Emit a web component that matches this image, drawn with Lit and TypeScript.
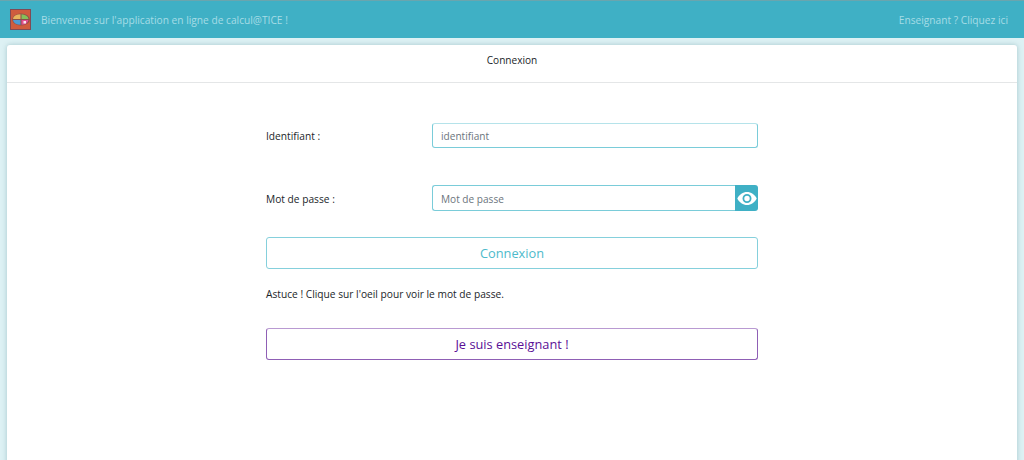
import { LitElement, html, css } from "lit";
import { customElement } from "lit/decorators.js";

@customElement("app-root")
export class AppRoot extends LitElement {
  static styles = css`
    :host { display: block; height: 460px; overflow: hidden; background: #ddf1f4; font-family: "Open Sans", "Noto Sans", sans-serif; color: #212529; }
    .nav { height: 38px; box-sizing: border-box; border-top: 1px solid #6aa5ae; background: #3fb0c5; display: flex; align-items: center; padding: 0 16px 0 10px; font-size: 10.2px; color: #a6dce6; }
    .logo { width: 21px; height: 21px; margin-right: 10px; display: block; }
    .spacer { flex: 1; }
    .card { margin: 7px 7px 0; height: 440px; background: #fff; border-radius: 3px; box-shadow: 0 0 5px rgba(60,120,130,.35); }
    .head { height: 38px; box-sizing: border-box; padding-bottom: 7px; border-bottom: 1px solid #e4e6e7; display: flex; align-items: center; justify-content: center; font-size: 10.1px; }
    .form { width: 492px; margin: 40px auto 0 259px; display: flex; flex-direction: column; }
    .row { display: grid; grid-template-columns: 166px 326px; align-items: center; font-size: 10.2px; }
    .row + .row { margin-top: 37px; }
    .label { padding-top: 1px; }
    .field { height: 26px; box-sizing: border-box; border: 1px solid #7accd9; border-radius: 3px; display: flex; align-items: center; padding: 1px 8px 0; color: #6c757d; font-size: 10.1px; }
    .first { height: 25px; border-top-color: #b5e3ea; }
    .group { display: flex; height: 26px; }
    .group .field { flex: 1; border-radius: 3px 0 0 3px; border-right: 0; }
    .eye { width: 23px; background: #3fb0c5; border-radius: 0 3px 3px 0; display: flex; align-items: center; justify-content: center; }
    .btn { height: 32px; box-sizing: border-box; border-radius: 3px; background: #fff; display: flex; align-items: center; justify-content: center; font-size: 12.8px; }
    .login { margin-top: 26px; border: 1px solid #85d0dc; color: #4dbacb; }
    .tip { margin: 17px 0 0; font-size: 10.2px; line-height: 16px; }
    .teach { margin-top: 26px; border: 1px solid #8f5fb5; border-top-color: #b99ad2; color: #5a0f96; }
  `;

  render() {
    return html`
      <div class="nav">
        <svg class="logo" viewBox="0 0 21 21">
          <rect x=".5" y=".5" width="20" height="20" fill="#cf5c3e" stroke="#7f4a55"/>
          <ellipse cx="11" cy="10.500" rx="8.800" ry="6" fill="#8a4f48"/>
          <path d="M3 10a7.500 4.800 0 0 1 7.500-4.800v4.800z" fill="#e8b45c"/>
          <path d="M11.500 5.200a7.500 4.800 0 0 1 7 4.800h-7z" fill="#86c05a"/>
          <path d="M3 11h7.500v4.800A7.500 4.800 0 0 1 3 11z" fill="#4f9bd2"/>
          <path d="M11.500 11h7a7 4.800 0 0 1-7 4.800z" fill="#e2508f"/>
          <rect x="13.500" y="12" width="2.500" height="2.500" fill="#f8e8f0"/>
        </svg>
        <span>Bienvenue sur l'application en ligne de calcul@TICE !</span>
        <span class="spacer"></span>
        <span>Enseignant ? Cliquez ici</span>
      </div>
      <div class="card">
        <div class="head">Connexion</div>
        <div class="form">
          <div class="row">
            <span class="label">Identifiant :</span>
            <div class="field first">identifiant</div>
          </div>
          <div class="row">
            <span class="label">Mot de passe :</span>
            <div class="group">
              <div class="field">Mot de passe</div>
              <div class="eye">
                <svg width="20" height="13" viewBox="0 0 20 13">
                  <path fill="#fff" d="M.3 6.500C2.300 2.600 6 0 10 0s7.700 2.600 9.700 6.500C17.700 10.400 14 13 10 13S2.300 10.400.3 6.500z"/>
                  <circle cx="10" cy="6.500" r="3.600" fill="none" stroke="#3fb0c5" stroke-width="1.800"/>
                </svg>
              </div>
            </div>
          </div>
          <div class="btn login">Connexion</div>
          <p class="tip">Astuce ! Clique sur l'oeil pour voir le mot de passe.</p>
          <div class="btn teach">Je suis enseignant !</div>
        </div>
      </div>
    `;
  }
}
